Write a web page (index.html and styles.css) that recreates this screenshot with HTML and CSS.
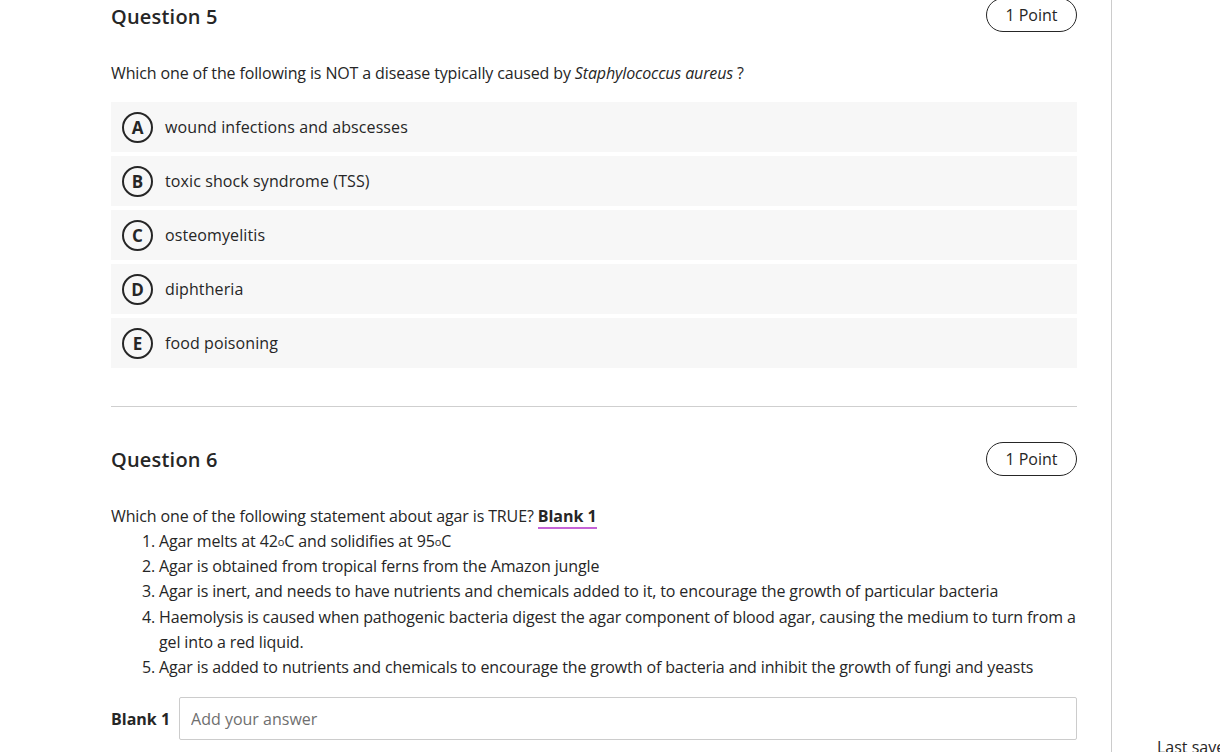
FILE: index.html
```html
<!DOCTYPE html>
<html>
<head>
<meta charset="utf-8">
<link rel="stylesheet" href="styles.css">
</head>
<body>
<div class="page">
  <main class="main">
    <section class="question">
      <div class="q-head">
        <h2 class="q-title q5-title">Question 5</h2>
        <span class="pill">1 Point</span>
      </div>
      <p class="q-text">Which one of the following is NOT a disease typically caused by <em>Staphylococcus aureus</em> ?</p>
      <ul class="options">
        <li class="option"><span class="letter">A</span><span class="opt-text">wound infections and abscesses</span></li>
        <li class="option"><span class="letter">B</span><span class="opt-text">toxic shock syndrome (TSS)</span></li>
        <li class="option"><span class="letter">C</span><span class="opt-text">osteomyelitis</span></li>
        <li class="option"><span class="letter">D</span><span class="opt-text">diphtheria</span></li>
        <li class="option"><span class="letter">E</span><span class="opt-text">food poisoning</span></li>
      </ul>
    </section>
    <hr class="sep">
    <section class="question q6">
      <div class="q-head">
        <h2 class="q-title">Question 6</h2>
        <span class="pill">1 Point</span>
      </div>
      <p class="q-text q6-text">Which one of the following statement about agar is TRUE? <strong class="blank-ref">Blank 1</strong></p>
      <ol class="statements">
        <li>Agar melts at 42<span class="deg">o</span>C and solidifies at 95<span class="deg">o</span>C</li>
        <li>Agar is obtained from tropical ferns from the Amazon jungle</li>
        <li>Agar is inert, and needs to have nutrients and chemicals added to it, to encourage the growth of particular bacteria</li>
        <li>Haemolysis is caused when pathogenic bacteria digest the agar component of blood agar, causing the medium to turn from a gel into a red liquid.</li>
        <li>Agar is added to nutrients and chemicals to encourage the growth of bacteria and inhibit the growth of fungi and yeasts</li>
      </ol>
      <div class="blank-row">
        <label class="blank-label" for="b1">Blank 1</label>
        <input class="blank-input" id="b1" type="text" placeholder="Add your answer">
      </div>
    </section>
  </main>
  <aside class="side">
    <div class="saved">Last saved</div>
  </aside>
</div>
</body>
</html>
```

FILE: styles.css
```css
html, body {
  margin: 0;
  padding: 0;
  background: #fff;
  overflow: hidden;
  height: 752px;
}
body {
  font-family: "Open Sans", "Liberation Sans", sans-serif;
  color: #262626;
  font-size: 16px;
}
.page {
  display: flex;
  height: 752px;
}
.main {
  width: 1111px;
  box-sizing: border-box;
  padding: 0 34px 0 111px;
  margin-top: -2px;
}
.q-head {
  display: flex;
  justify-content: space-between;
  align-items: center;
  height: 34px;
}
.q-title {
  margin: 0;
  font-size: 20px;
  font-weight: 600;
  letter-spacing: 0.2px;
  color: #262626;
}
.q5-title {
  padding-top: 3px;
}
.pill {
  display: inline-flex;
  align-items: center;
  justify-content: center;
  box-sizing: border-box;
  width: 91px;
  height: 34px;
  border: 1px solid #262626;
  border-radius: 17px;
  font-size: 16px;
}
.q-text {
  margin: 29px 0 0;
  line-height: 24px;
  letter-spacing: -0.13px;
}
.options {
  list-style: none;
  margin: 17px 0 0;
  padding: 0;
  display: flex;
  flex-direction: column;
  gap: 4px;
}
.option {
  display: flex;
  align-items: center;
  height: 50px;
  background: #f7f7f7;
  padding-left: 11px;
}
.letter {
  display: inline-flex;
  align-items: center;
  justify-content: center;
  box-sizing: border-box;
  width: 31px;
  height: 31px;
  border: 2px solid #262626;
  border-radius: 50%;
  font-weight: 700;
  font-size: 17px;
  margin-right: 12px;
}
.opt-text {
  font-weight: 500;
  letter-spacing: 0.1px;
}
.sep {
  border: 0;
  border-top: 1px solid #cfcfcf;
  margin: 38px 0 0;
}
.q6 {
  margin-top: 35px;
}
.q6-text {
  margin-top: 28px;
}
.blank-ref {
  font-weight: 700;
  letter-spacing: 0;
  border-bottom: 2px solid #c462d6;
}
.statements {
  margin: 1px 0 0;
  padding-left: 48px;
  line-height: 25.2px;
  letter-spacing: -0.13px;
}
.deg {
  font-size: 11px;
  vertical-align: 1px;
  letter-spacing: 0;
}
.blank-row {
  display: flex;
  align-items: center;
  margin-top: 17px;
}
.blank-label {
  font-weight: 700;
  margin-right: 9px;
}
.blank-input {
  flex: 1;
  height: 43px;
  box-sizing: border-box;
  border: 1px solid #cccccc;
  border-radius: 2px;
  padding: 0 11px;
  font-family: "Open Sans", "Liberation Sans", sans-serif;
  font-size: 16px;
  color: #262626;
}
.blank-input::placeholder {
  color: #6f6f6f;
}
.side {
  flex: 1;
  border-left: 1px solid #cccccc;
  position: relative;
}
.saved {
  position: absolute;
  left: 45px;
  top: 736px;
  font-size: 16px;
  white-space: nowrap;
}
```
